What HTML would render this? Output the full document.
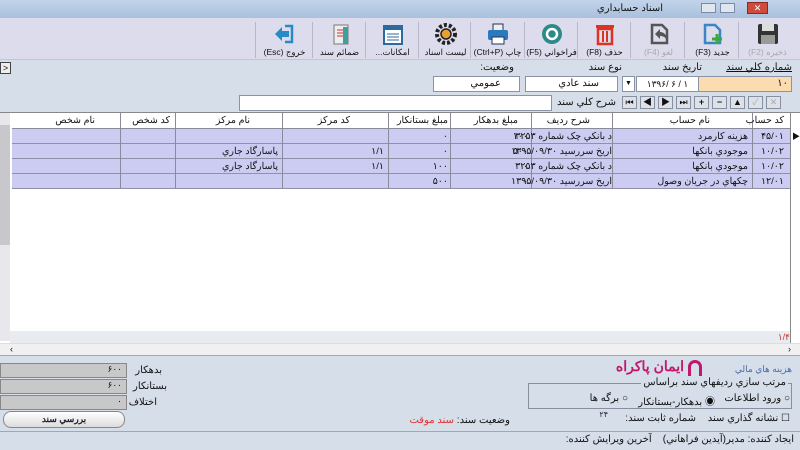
<!DOCTYPE html>
<html><head><meta charset="utf-8"><style>
*{margin:0;padding:0;box-sizing:border-box}
body{width:800px;height:450px;overflow:hidden;position:relative;background:#d6deea;font-family:"Liberation Sans","Noto Sans CJK SC",sans-serif;font-size:10px;color:#111}
.a{position:absolute}
.t{position:absolute;white-space:nowrap;direction:rtl}
.n{direction:ltr;unicode-bidi:bidi-override;display:inline-block}
.btn{position:absolute;top:20px;height:40px;width:53px;text-align:center}
.btn .l{position:absolute;top:27px;left:0;right:0;font-size:8.5px;direction:rtl;white-space:nowrap}
.sep{position:absolute;top:22px;width:1px;height:36px;background:#b8b8cc}
.cell{position:absolute;border-right:1px solid #8a8a9a;height:100%;top:0}
.row{position:absolute;left:12px;width:778px;height:15px;background:#ccccf2;border-bottom:1px solid #9090a8}
.inp{position:absolute;background:#fff;border:1px solid #8a94a8;height:16px}
.nb{position:absolute;top:96px;width:15px;height:13px;border:1px solid #8890a0;background:#dde2ea;font-size:9px;text-align:center;line-height:11px}
</style></head><body>
<div class="a" style="left:0;top:0;width:800px;height:18px;background:linear-gradient(#c2d4ea,#a9c0dc)"></div>
<div class="t" style="right:137px;top:3px;font-size:10px">اسناد حسابداري</div>
<div class="a" style="left:701px;top:3px;width:15px;height:10px;background:#dfe6f0;border:1px solid #7a8aa8"></div>
<div class="a" style="left:720px;top:3px;width:15px;height:10px;background:#dfe6f0;border:1px solid #7a8aa8"></div>
<div class="a" style="left:747px;top:2px;width:21px;height:12px;background:#cf4b3c;border:1px solid #8a2a20;color:#fff;font-size:9px;text-align:center;line-height:10px">✕</div>
<div class="a" style="left:0;top:18px;width:800px;height:42px;background:#dcdcec;border-bottom:1px solid #c4c4d4"></div>
<div class="sep" style="left:738px"></div><div class="sep" style="left:684px"></div><div class="sep" style="left:630px"></div><div class="sep" style="left:577px"></div><div class="sep" style="left:524px"></div><div class="sep" style="left:470px"></div><div class="sep" style="left:418px"></div><div class="sep" style="left:365px"></div><div class="sep" style="left:312px"></div><div class="sep" style="left:255px"></div>
<div class="btn" style="left:741px"><svg width="24" height="24" style="margin-top:2px"><rect x="2" y="2" width="20" height="20" rx="2" fill="#333"/><rect x="6" y="2" width="12" height="7" fill="#ddd"/><rect x="5" y="13" width="14" height="9" fill="#999"/></svg><div class="l" style="color:#aaa">ذخيره (F2)</div></div>
<div class="btn" style="left:686px"><svg width="24" height="24" style="margin-top:2px"><path d="M4 3h10l5 5v13H4z" fill="none" stroke="#3a86c6" stroke-width="2.5"/><path d="M16 12v10M11 17h10" stroke="#3aaa3a" stroke-width="3"/></svg><div class="l">جديد (F3)</div></div>
<div class="btn" style="left:632px"><svg width="24" height="24" style="margin-top:2px"><path d="M5 3h10l5 5v13H5z" fill="none" stroke="#555" stroke-width="2.5"/><path d="M8 12l5-5v3c4 0 7 3 7 8-2-3-4-4-7-4v3z" fill="#555"/></svg><div class="l" style="color:#aaa">لغو (F4)</div></div>
<div class="btn" style="left:578px"><svg width="24" height="24" style="margin-top:2px"><rect x="3" y="3" width="18" height="3" fill="#d32"/><rect x="5" y="7" width="14" height="15" fill="none" stroke="#d32" stroke-width="2.5"/><path d="M10 9v11M14 9v11" stroke="#d32" stroke-width="2"/></svg><div class="l">حذف (F8)</div></div>
<div class="btn" style="left:525px"><svg width="24" height="24" style="margin-top:2px"><circle cx="12" cy="12" r="10" fill="#2c8a8a"/><circle cx="12" cy="12" r="5" fill="none" stroke="#fff" stroke-width="2.5"/></svg><div class="l">فراخواني (F5)</div></div>
<div class="btn" style="left:471px"><svg width="24" height="24" style="margin-top:2px"><rect x="7" y="2" width="10" height="7" fill="#eee" stroke="#235" /><rect x="2" y="8" width="20" height="10" rx="2" fill="#2a7ac0"/><rect x="6" y="15" width="12" height="7" fill="#fff" stroke="#235"/></svg><div class="l">چاپ (Ctrl+P)</div></div>
<div class="btn" style="left:419px"><svg width="24" height="24" style="margin-top:2px"><circle cx="12" cy="12" r="9" fill="none" stroke="#222" stroke-width="4" stroke-dasharray="3 2"/><circle cx="12" cy="12" r="5" fill="#e8a030" stroke="#222" stroke-width="1.5"/></svg><div class="l">ليست اسناد</div></div>
<div class="btn" style="left:366px"><svg width="24" height="24" style="margin-top:2px"><rect x="3" y="4" width="18" height="18" fill="#fff" stroke="#2a6aa0" stroke-width="2"/><rect x="3" y="4" width="18" height="4" fill="#2a6aa0"/><path d="M6 12h12M6 15h12M6 18h12" stroke="#2a6aa0"/></svg><div class="l">امكانات...</div></div>
<div class="btn" style="left:313px"><svg width="24" height="24" style="margin-top:2px"><rect x="6" y="3" width="14" height="19" fill="#eee" stroke="#777"/><path d="M9 8h8M9 11h8M9 14h8" stroke="#c33"/><rect x="15" y="5" width="5" height="17" fill="#3aa0a0"/></svg><div class="l">ضمائم سند</div></div>
<div class="btn" style="left:258px"><svg width="24" height="24" style="margin-top:2px"><path d="M12 4h7v16h-7" fill="none" stroke="#2a8ac6" stroke-width="2.5"/><path d="M2 12l7-7v4h7v6H9v4z" fill="#2a8ac6"/></svg><div class="l">خروج (Esc)</div></div>
<div class="a" style="left:0;top:62px;width:11px;height:12px;border:1px solid #444;background:#eee;font-size:9px;line-height:10px;text-align:center">&gt;</div>
<div class="t" style="right:8px;top:62px;text-decoration:underline">شماره كلي سند</div>
<div class="t" style="right:98px;top:62px">تاريخ سند</div>
<div class="t" style="right:178px;top:62px">نوع سند</div>
<div class="t" style="right:286px;top:62px">وضعيت:</div>
<div class="inp" style="left:667px;top:76px;width:125px;background:#fbdcb0;text-align:right;padding-right:3px;line-height:14px">١٠</div>
<div class="inp" style="left:636px;top:76px;width:63px;text-align:center;line-height:14px;font-size:9px"><span class="n">١٣٩۶/ ۶ / ١</span></div>
<div class="inp" style="left:622px;top:76px;width:13px;font-size:7px;text-align:center;line-height:14px">▼</div>
<div class="inp" style="left:525px;top:76px;width:93px;text-align:right;padding-right:18px;line-height:14px">سند عادي</div>
<div class="inp" style="left:433px;top:76px;width:87px;text-align:right;padding-right:18px;line-height:14px">عمومي</div>
<div class="inp" style="left:239px;top:95px;width:313px"></div>
<div class="t" style="right:184px;top:97px">شرح كلي سند</div>
<div class="nb" style="left:622px">⏮</div><div class="nb" style="left:640px">◀</div><div class="nb" style="left:658px">▶</div><div class="nb" style="left:676px">⏭</div><div class="nb" style="left:694px;font-weight:bold">+</div><div class="nb" style="left:712px;font-weight:bold">−</div><div class="nb" style="left:730px">▲</div><div class="nb" style="left:748px;color:#aaa">✓</div><div class="nb" style="left:766px;color:#aaa">✕</div>
<div class="a" style="left:0;top:112px;width:800px;height:243px;background:#fff;border-top:1px solid #888"></div>
<div class="a" style="left:0;top:113px;width:10px;height:228px;background:#e8e8ec"></div>
<div class="a" style="left:0;top:125px;width:10px;height:120px;background:#c8c8cc"></div>
<div class="a" style="left:12px;top:113px;width:778px;height:16px;background:#fff;border-bottom:1px solid #8a8a9a;font-size:9.5px">
<div class="cell" style="left:108px"></div><div class="cell" style="left:163px"></div><div class="cell" style="left:270px"></div><div class="cell" style="left:376px"></div><div class="cell" style="left:438px"></div><div class="cell" style="left:519px"></div><div class="cell" style="left:600px"></div><div class="cell" style="left:740px"></div>
<div class="t" style="right:695px;top:2px">نام شخص</div><div class="t" style="right:620px;top:2px">كد شخص</div><div class="t" style="right:540px;top:2px">نام مركز</div><div class="t" style="right:440px;top:2px">كد مركز</div><div class="t" style="right:342px;top:2px">مبلغ بستانكار</div><div class="t" style="right:272px;top:2px">مبلغ بدهكار</div><div class="t" style="right:200px;top:2px">شرح رديف</div><div class="t" style="right:80px;top:2px">نام حساب</div><div class="t" style="right:6px;top:2px">كد حساب</div>
</div>
<div class="a" style="left:790px;top:113px;width:10px;height:230px;border-left:1px solid #888"></div>
<div class="a" style="left:792px;top:131px;font-size:8px">▶</div>
<div class="row" style="top:129px"></div><div class="row" style="top:144px"></div><div class="row" style="top:159px"></div><div class="row" style="top:174px"></div>
<div class="a" style="left:12px;top:129px;width:778px;height:60px;font-size:9.5px">
<div class="cell" style="left:108px"></div><div class="cell" style="left:163px"></div><div class="cell" style="left:270px"></div><div class="cell" style="left:376px"></div><div class="cell" style="left:438px"></div><div class="cell" style="left:519px"></div><div class="cell" style="left:600px"></div><div class="cell" style="left:740px"></div>
<div class="t" style="right:6px;top:2px"><span class="n">۴۵/٠١</span></div><div class="t" style="right:42px;top:2px">هزينه كارمرد</div><div class="t" style="right:178px;top:2px">د بانكي چک شماره ٣٢۵٣</div><div class="t" style="right:262px;top:2px">١٠٠</div><div class="t" style="right:342px;top:2px">٠</div>
<div class="t" style="right:6px;top:17px"><span class="n">١٠/٠٢</span></div><div class="t" style="right:42px;top:17px">موجودي بانكها</div><div class="t" style="right:178px;top:17px">اريخ سررسيد <span class="n">١٣٩۵/٠٩/٣٠</span></div><div class="t" style="right:262px;top:17px">۵٠٠</div><div class="t" style="right:342px;top:17px">٠</div><div class="t" style="right:406px;top:17px"><span class="n">١/١</span></div><div class="t" style="right:512px;top:17px">پاسارگاد جاري</div>
<div class="t" style="right:6px;top:32px"><span class="n">١٠/٠٢</span></div><div class="t" style="right:42px;top:32px">موجودي بانكها</div><div class="t" style="right:178px;top:32px">د بانكي چک شماره ٣٢۵٣</div><div class="t" style="right:262px;top:32px">٠</div><div class="t" style="right:342px;top:32px">١٠٠</div><div class="t" style="right:406px;top:32px"><span class="n">١/١</span></div><div class="t" style="right:512px;top:32px">پاسارگاد جاري</div>
<div class="t" style="right:6px;top:47px"><span class="n">١٢/٠١</span></div><div class="t" style="right:42px;top:47px">چكهاي در جريان وصول</div><div class="t" style="right:178px;top:47px">اريخ سررسيد <span class="n">١٣٩۵/٠٩/٣٠</span></div><div class="t" style="right:262px;top:47px">٠</div><div class="t" style="right:342px;top:47px">۵٠٠</div>
</div>
<div class="a" style="left:10px;top:331px;width:780px;height:12px;background:#e8ebf0"></div>
<div class="t" style="right:10px;top:332px;color:#c33;font-size:9px"><span class="n">١/۴</span></div>
<div class="a" style="left:0;top:343px;width:800px;height:12px;background:#f0f0f0;border-top:1px solid #ddd"></div>
<div class="a" style="left:10px;top:344px;font-size:9px">‹</div><div class="a" style="left:788px;top:344px;font-size:9px">›</div>
<div class="a" style="left:0;top:355px;width:800px;height:1px;background:#a0a8b8"></div>
<div class="a" style="left:0;top:363px;width:127px;height:15px;background:#c8c8c8;border:1px solid #888;text-align:right;padding-right:4px;font-size:9px">۶٠٠</div>
<div class="a" style="left:0;top:379px;width:127px;height:15px;background:#c8c8c8;border:1px solid #888;text-align:right;padding-right:4px;font-size:9px">۶٠٠</div>
<div class="a" style="left:0;top:395px;width:127px;height:15px;background:#c8c8c8;border:1px solid #888;text-align:right;padding-right:4px;font-size:9px">٠</div>
<div class="t" style="right:638px;top:365px">بدهكار</div><div class="t" style="right:633px;top:381px">بستانكار</div><div class="t" style="right:643px;top:397px">اختلاف</div>
<div class="a" style="left:3px;top:411px;width:122px;height:17px;border:1px solid #888;border-radius:8px;background:linear-gradient(#fff,#dcdcdc);text-align:center;font-size:9px;font-weight:bold;line-height:15px;color:#223">بررسي سند</div>
<div class="t" style="right:8px;top:364px;font-size:9px;color:#4a6ab0">هزينه هاي مالي</div>
<div class="a" style="left:688px;top:360px;width:14px;height:16px;border:3px solid #c0186a;border-bottom:none;border-radius:7px 7px 0 0"></div>
<div class="t" style="right:116px;top:358px;font-size:14px;font-weight:bold;color:#c0186a">ايمان پاكراه</div>
<div class="a" style="left:528px;top:383px;width:264px;height:26px;border:1px solid #8890a0"></div>
<div class="t" style="right:12px;top:377px;background:#d6deea;padding:0 2px">مرتب سازي رديفهاي سند براساس</div>
<div class="t" style="right:10px;top:393px">○ ورود اطلاعات</div><div class="t" style="right:85px;top:393px">◉ بدهكار-بستانكار</div><div class="t" style="right:172px;top:393px">○ برگه ها</div>
<div class="t" style="right:10px;top:413px">☐ نشانه گذاري سند</div>
<div class="t" style="right:104px;top:413px">شماره ثابت سند:</div><div class="t" style="right:192px;top:410px;color:#224;font-size:8px">٢۴</div>
<div class="t" style="right:290px;top:415px">وضعيت سند: <span style="color:#d33">سند موقت</span></div>
<div class="a" style="left:0;top:431px;width:800px;height:1px;background:#a0a8b8"></div>
<div class="t" style="right:6px;top:434px">ايجاد كننده: مدير(آيدين فراهاني)&nbsp;&nbsp;&nbsp; آخرين ويرايش كننده:</div>
</body></html>
